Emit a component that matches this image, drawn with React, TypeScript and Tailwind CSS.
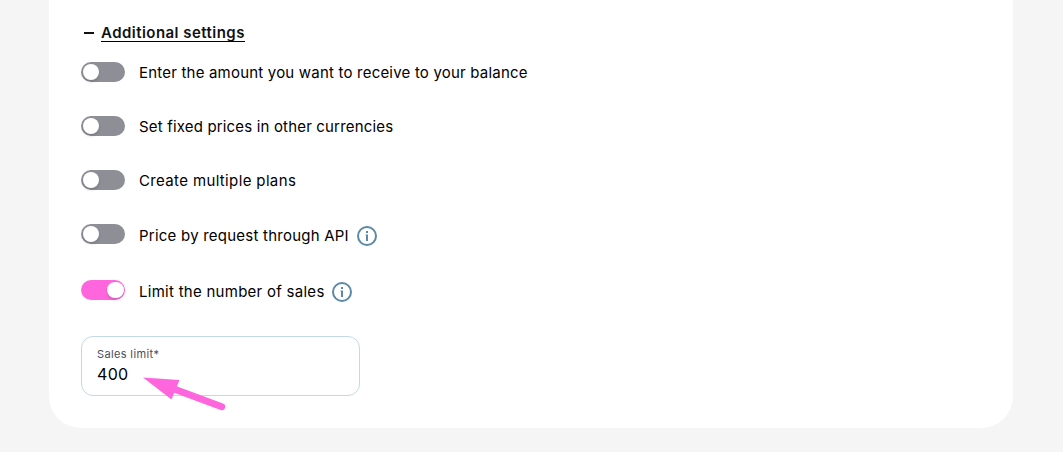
import clsx from "clsx";

type Setting = {
  label: string;
  enabled: boolean;
  info?: boolean;
  rowClass: string;
  labelClass: string;
};

const settings: Setting[] = [
  {
    label: "Enter the amount you want to receive to your balance",
    enabled: false,
    rowClass: "mt-4",
    labelClass: "tracking-[0.2px]",
  },
  {
    label: "Set fixed prices in other currencies",
    enabled: false,
    rowClass: "mt-[30px]",
    labelClass: "tracking-[0.17px]",
  },
  {
    label: "Create multiple plans",
    enabled: false,
    rowClass: "mt-[30px]",
    labelClass: "tracking-[0.36px]",
  },
  {
    label: "Price by request through API",
    enabled: false,
    info: true,
    rowClass: "mt-[30px]",
    labelClass: "mt-px w-[210px] tracking-[0.23px]",
  },
  {
    label: "Limit the number of sales",
    enabled: true,
    info: true,
    rowClass: "mt-8",
    labelClass: "mt-px w-[185px] tracking-[0.27px]",
  },
];

function Toggle({ enabled }: { enabled: boolean }) {
  return (
    <button
      role="switch"
      aria-checked={enabled}
      className={clsx(
        "mt-px flex h-5 w-11 shrink-0 items-center rounded-full",
        enabled ? "justify-end bg-[#ff66dd] pr-[1.5px]" : "justify-start bg-[#8e8e96] pl-[1.5px]"
      )}
    >
      <span className="h-[16.5px] w-[16.5px] rounded-full bg-white shadow-[0_2px_3px_rgba(0,0,0,0.15)]" />
    </button>
  );
}

function InfoIcon() {
  return (
    <svg className="ml-2 mt-[3px] h-5 w-5 shrink-0" viewBox="0 0 20 20" fill="none">
      <circle cx="10" cy="10" r="9" stroke="#5b89a6" strokeWidth="2" />
      <rect x="9" y="5" width="2" height="2" fill="#5b89a6" />
      <path d="M8.6 8.6H11V15H9V9.6h-.4z" fill="#5b89a6" />
    </svg>
  );
}

export default function App() {
  return (
    <div className="h-[452px] overflow-hidden bg-[#f5f5f5] px-[49px] font-['Inter',sans-serif] text-base leading-6 text-black">
      <div className="h-[428px] w-[964px] rounded-b-[32px] bg-white px-8 pt-[21px]">
        <div className="flex h-6 items-start">
          <span className="ml-[3px] mt-[11px] h-[2px] w-[10px] bg-[#111]" />
          <h2 className="ml-[7px] h-[21px] w-36 whitespace-nowrap border-b border-black text-[15px] leading-6 font-semibold tracking-[0.46px] text-[#111]">
            Additional settings
          </h2>
        </div>

        {settings.map((item) => (
          <div key={item.label} className={clsx("flex h-6 items-start", item.rowClass)}>
            <Toggle enabled={item.enabled} />
            <span className={clsx("ml-[14px] whitespace-nowrap text-[15px]", item.labelClass)}>
              {item.label}
            </span>
            {item.info && <InfoIcon />}
          </div>
        ))}

        {/* Sales limit field */}
        <div className="relative mt-[33px] h-[60px] w-[279px] rounded-xl border border-[#c3d9e7] px-[15px] pt-[9px]">
          <label className="block text-[11px] leading-4 tracking-[0.36px] text-[#4b4b55]">
            Sales limit*
          </label>
          <div className="text-base leading-6 tracking-[0.3px]">400</div>
          <svg
            className="absolute left-[58px] top-[36px] h-[40px] w-[90px]"
            viewBox="140 373 90 40"
            fill="#ff66dd"
          >
            <path d="M143 377.5 179.5 380 171.5 399.5z" />
            <path d="M174 389 221.8 406.8" stroke="#ff66dd" strokeWidth="6.8" strokeLinecap="round" />
          </svg>
        </div>
      </div>
    </div>
  );
}
